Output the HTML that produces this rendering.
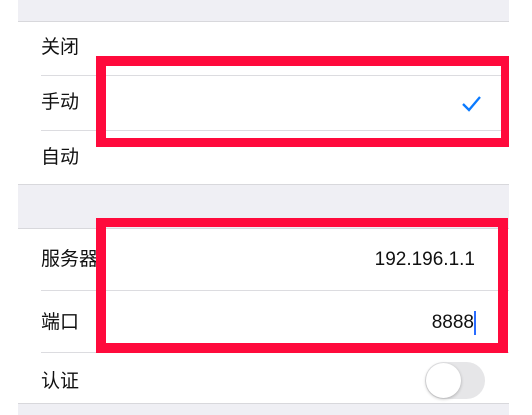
<!DOCTYPE html>
<html><head><meta charset="utf-8"><style>
*{margin:0;padding:0;box-sizing:border-box}
body{width:532px;height:415px;background:#fff;position:relative;overflow:hidden;font-family:"Liberation Sans","Noto Sans CJK SC",sans-serif;color:#111}
.g{position:absolute;left:18px;width:491px;background:#efeff4}
.w{position:absolute;left:18px;width:491px;background:#fff}
.sep{position:absolute;left:41px;width:468px;height:1px;background:#dcdce0}
.hl{position:absolute;left:18px;width:491px;height:1px;background:#d8d8dc}
.t{position:absolute;left:41px;font-size:19px;line-height:24px}
.v{position:absolute;font-size:19px;line-height:24px}
.box{position:absolute;border:solid #ff0a3c}
</style></head><body>
<div class="g" style="top:0;height:22px"></div>
<div class="hl" style="top:21px"></div>
<div class="g" style="top:184px;height:44px"></div>
<div class="hl" style="top:184px"></div>
<div class="hl" style="top:228px"></div>
<div class="g" style="top:404px;height:11px"></div>
<div class="hl" style="top:403px"></div>
<div class="sep" style="top:75px"></div>
<div class="sep" style="top:130px"></div>
<div class="sep" style="top:290px"></div>
<div class="sep" style="top:352px"></div>
<div class="t" style="top:36px">关闭</div>
<div class="t" style="top:91px">手动</div>
<div class="t" style="top:146px">自动</div>
<div class="t" style="top:248px">服务器</div>
<div class="t" style="top:311px">端口</div>
<div class="t" style="top:370px">认证</div>
<svg style="position:absolute;left:461px;top:94px" width="22" height="20"><path d="M2 10 L8 16 L19 3" fill="none" stroke="#0a7aff" stroke-width="2.3"/></svg>
<div class="v" style="top:248px;right:57px">192.196.1.1</div>
<div class="v" style="top:311px;right:58px">8888</div>
<div style="position:absolute;left:474px;top:311px;width:2px;height:24px;background:#2a6cff"></div>
<div style="position:absolute;left:425px;top:362px;width:60px;height:37px;border-radius:19px;background:#e6e6e8"></div>
<div style="position:absolute;left:426px;top:363px;width:35px;height:35px;border-radius:50%;background:#fff;box-shadow:0 1px 3px rgba(0,0,0,.25)"></div>
<div class="box" style="left:96px;top:56px;width:413px;height:91px;border-width:10px 8px 9px 10px"></div>
<div class="box" style="left:96px;top:218px;width:412px;height:135px;border-width:9px 10px 10px 10px"></div>
</body></html>
